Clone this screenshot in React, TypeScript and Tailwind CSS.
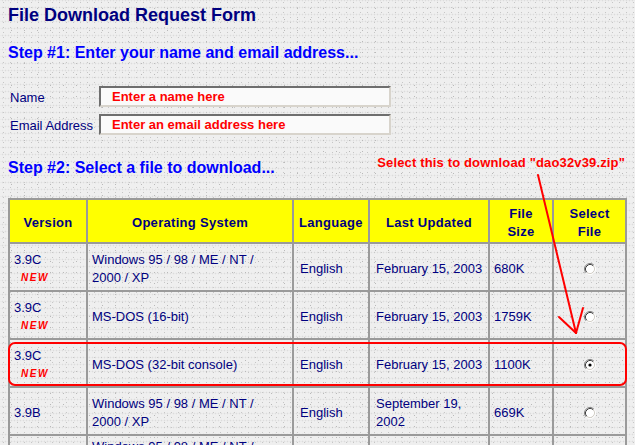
import React from "react";

type Row = {
  version: string;
  isNew: boolean;
  os: string[];
  date: string[];
  size: string;
  checked: boolean;
};

const rows: Row[] = [
  { version: "3.9C", isNew: true, os: ["Windows 95 / 98 / ME / NT /", "2000 / XP"], date: ["February 15, 2003"], size: "680K", checked: false },
  { version: "3.9C", isNew: true, os: ["MS-DOS (16-bit)"], date: ["February 15, 2003"], size: "1759K", checked: false },
  { version: "3.9C", isNew: true, os: ["MS-DOS (32-bit console)"], date: ["February 15, 2003"], size: "1100K", checked: true },
  { version: "3.9B", isNew: false, os: ["Windows 95 / 98 / ME / NT /", "2000 / XP"], date: ["September 19,", "2002"], size: "669K", checked: false },
];

function Radio({ checked }: { checked: boolean }) {
  return (
    <svg width="12" height="12" viewBox="0 0 12 12">
      <circle cx="6" cy="6" r="4.2" fill="#ffffff" />
      <path d="M2.11 9.89 A5.5 5.5 0 0 1 9.89 2.11" fill="none" stroke="#808080" strokeWidth="1" />
      <path d="M9.89 2.11 A5.5 5.5 0 0 1 2.11 9.89" fill="none" stroke="#ffffff" strokeWidth="1" />
      <path d="M2.82 9.18 A4.5 4.5 0 0 1 9.18 2.82" fill="none" stroke="#404040" strokeWidth="1" />
      <path d="M9.18 2.82 A4.5 4.5 0 0 1 2.82 9.18" fill="none" stroke="#d4d0c8" strokeWidth="1" />
      {checked && <circle cx="6" cy="6" r="1.6" fill="#000000" />}
    </svg>
  );
}

const cell = "border-r-2 border-b-2 border-[#9a9a9a]";
const head = `${cell} h-[44px] pt-[3px] bg-[#ffff00] flex items-center justify-center text-center font-bold leading-[18px] tracking-[0.3px]`;
const data = `${cell} h-[48px] pt-[3px] leading-[18px]`;

export default function App() {
  return (
    <div
      className="relative w-[635px] h-[445px] overflow-hidden pt-[4px] text-[#000080] bg-[#efefef] bg-[radial-gradient(circle,#c6c6c6_0.6px,transparent_1px),radial-gradient(circle,#b9b9b9_0.6px,transparent_1px),radial-gradient(circle,#dcdcdc_0.7px,transparent_1.1px)] bg-size-[7px_5px,13px_11px,3px_7px] bg-position-[0_0,5px_3px,1px_4px]"
      style={{ fontFamily: '"Liberation Sans", Arial, sans-serif' }}
    >
      <h1 className="ml-[8px] text-[18px] leading-[22px] font-bold text-[#000080]">File Download Request Form</h1>

      <h2 className="ml-[8px] mt-[17px] text-[16px] leading-[20px] font-bold text-[#0000ff]">
        Step #1: Enter your name and email address...
      </h2>

      {/* Name / email inputs */}
      <div className="ml-[10px] mt-[23px] grid grid-cols-[89px_292px] gap-y-[7px] text-[13px]">
        <div className="h-[21px] flex items-center pt-[2px]">Name</div>
        <div className="h-[21px] border-2 border-t-[#6e6e6e] border-l-[#6e6e6e] border-b-[#d8d4cc] border-r-[#d8d4cc] bg-[#fafafa] pl-[11px] pt-[1px] leading-[16px] font-bold text-[#ff0000]">
          Enter a name here
        </div>
        <div className="h-[21px] flex items-center pt-[2px]">Email Address</div>
        <div className="h-[21px] border-2 border-t-[#6e6e6e] border-l-[#6e6e6e] border-b-[#d8d4cc] border-r-[#d8d4cc] bg-[#fafafa] pl-[11px] pt-[1px] leading-[16px] font-bold text-[#ff0000]">
          Enter an email address here
        </div>
      </div>

      <div className="ml-[8px] mt-[20px] w-[619px] flex justify-between items-start pr-[2px]">
        <h2 className="pt-[3px] text-[16px] leading-[20px] font-bold text-[#0000ff]">Step #2: Select a file to download...</h2>
        <span className="text-[13px] leading-[15px] font-bold tracking-[0.15px] text-[#ff0000]">Select this to download "dao32v39.zip"</span>
      </div>

      {/* File table */}
      <div className="ml-[8px] mt-[20px] w-[619px] grid grid-cols-[78px_206px_76px_120px_64px_73px] border-l-2 border-t-2 border-[#9a9a9a] text-[13px]">
        <div className={head}>Version</div>
        <div className={head}>Operating System</div>
        <div className={head}>Language</div>
        <div className={head}>Last Updated</div>
        <div className={head}>File<br />Size</div>
        <div className={head}>Select<br />File</div>

        {rows.map((r, i) => (
          <React.Fragment key={i}>
            <div className={`${data} flex flex-col justify-center pl-[4px]`}>
              <span>{r.version}</span>
              {r.isNew && (
                <span className="pl-[7px] text-[10px] font-bold italic tracking-[1.5px] text-[#ff0000]">NEW</span>
              )}
            </div>
            <div className={`${data} flex flex-col justify-center pl-[4px]`}>
              {r.os.map((t, j) => (
                <span key={j}>{t}</span>
              ))}
            </div>
            <div className={`${data} flex items-center pl-[6px]`}>English</div>
            <div className={`${data} flex flex-col justify-center pl-[6px]`}>
              {r.date.map((t, j) => (
                <span key={j}>{t}</span>
              ))}
            </div>
            <div className={`${data} flex items-center pl-[4px]`}>{r.size}</div>
            <div className={`${data} flex items-center justify-center`}>
              <Radio checked={r.checked} />
            </div>
          </React.Fragment>
        ))}

        {/* partially visible next row */}
        <div className={`${cell} h-[56px] flex items-center pl-[4px] leading-[18px]`}>3.9A</div>
        <div className={`${cell} h-[56px] flex flex-col pt-[2px] pl-[4px] leading-[18px]`}>
          <span>Windows 95 / 98 / ME / NT /</span>
          <span>2000 / XP</span>
        </div>
        <div className={`${cell} h-[56px] flex items-center pl-[6px] leading-[18px]`}>English</div>
        <div className={`${cell} h-[56px] flex items-center pl-[6px] leading-[18px]`}>June 2002</div>
        <div className={`${cell} h-[56px] flex items-center pl-[4px] leading-[18px]`}>660K</div>
        <div className={`${cell} h-[56px] flex items-center justify-center`}>
          <Radio checked={false} />
        </div>
      </div>

      {/* Red highlight round the selected row */}
      <div className="absolute left-[8px] top-[342px] w-[619px] h-[44px] border-2 border-[#ff0000] rounded-[7px] pointer-events-none" />

      {/* Red pointer arrow */}
      <svg className="absolute left-0 top-0 pointer-events-none" width="635" height="445">
        <g stroke="#ff0000" strokeWidth="2" fill="none" strokeLinecap="round">
          <line x1="538" y1="175" x2="576" y2="333" />
          <line x1="559" y1="317" x2="576" y2="333" />
          <line x1="583" y1="308" x2="576" y2="333" />
        </g>
      </svg>
    </div>
  );
}
